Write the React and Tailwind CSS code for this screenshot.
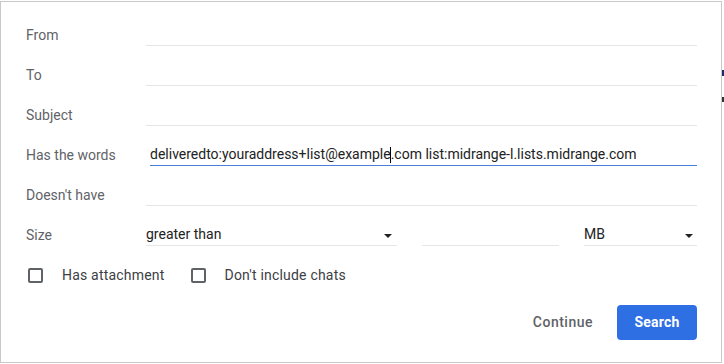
import React from 'react';

const Caret = () => (
  <svg width="8" height="4" viewBox="0 0 8 4" className="shrink-0">
    <path d="M0 0h8L4 4z" fill="#222" />
  </svg>
);

const Row = ({ label, children }) => (
  <div className="flex items-center h-10">
    <div className="w-[120px] shrink-0 text-[#5f6368]">{label}</div>
    {children}
  </div>
);

const Field = ({ active, children }) => (
  <div
    className={`flex-1 h-5 mt-[2px] border-b flex items-center ${
      active ? 'border-[#4a7fe0] ml-1' : 'border-[#e6e6e6]'
    }`}
  >
    {children}
  </div>
);

const Check = ({ label }) => (
  <label className="flex items-center">
    <span className="w-[15px] h-[15px] ml-[2px] border-2 border-[#5f6368] rounded-[2px]" />
    <span className="ml-[19px] text-[#3c4043] tracking-[0.2px]">{label}</span>
  </label>
);

export default function App() {
  return (
    <div className="flex bg-white w-[724px] h-[364px] font-['Roboto',sans-serif] text-[14px]">
      <div className="w-[722px] h-[362px] mt-[1px] border border-[#c9c9c9] bg-white flex flex-col pl-[25px] pr-[24px] pt-[13px]">
        <Row label="From"><Field /></Row>
        <Row label="To"><Field /></Row>
        <Row label="Subject"><Field /></Row>
        <Row label="Has the words">
          <Field active>
            <span className="text-[#222] whitespace-nowrap -mt-[2px]">
              deliveredto:youraddress+list@example
              <span className="inline-block w-px h-4 bg-black align-middle -mx-[0.5px]" />
              .com list:midrange-l.lists.midrange.com
            </span>
          </Field>
        </Row>
        <Row label="Doesn't have"><Field /></Row>
        <Row label="Size">
          <div className="flex items-center gap-[25px] flex-1 mt-[2px]">
            <div className="w-[251px] h-5 border-b border-[#e6e6e6] flex items-center justify-between pr-[5px] text-[#222]">
              <span className="-mt-[2px]">greater than</span>
              <Caret />
            </div>
            <div className="w-[137px] h-5 border-b border-[#e6e6e6]" />
            <div className="flex-1 h-5 border-b border-[#e6e6e6] flex items-center justify-between pr-[4px] text-[#222]">
              <span className="-mt-[2px]">MB</span>
              <Caret />
            </div>
          </div>
        </Row>
        <div className="flex items-center h-10 gap-[24px]">
          <Check label="Has attachment" />
          <Check label="Don't include chats" />
        </div>
        <div className="flex justify-end items-center mt-[10px] gap-[8px]">
          <button className="h-[35px] px-4 text-[#5f6368] font-medium tracking-[0.5px]">Continue</button>
          <button className="w-[80px] h-[35px] rounded-[4px] bg-[#2f6fe4] text-white font-bold tracking-[0.2px]">
            Search
          </button>
        </div>
      </div>
      <div className="flex-1 flex flex-col">
        <div className="h-[70px]" />
        <div className="h-[6px] bg-[#1d2d6b] w-[2px] ml-auto" />
        <div className="h-[21px]" />
        <div className="h-[5px] bg-[#333] w-[2px] ml-auto" />
      </div>
    </div>
  );
}
